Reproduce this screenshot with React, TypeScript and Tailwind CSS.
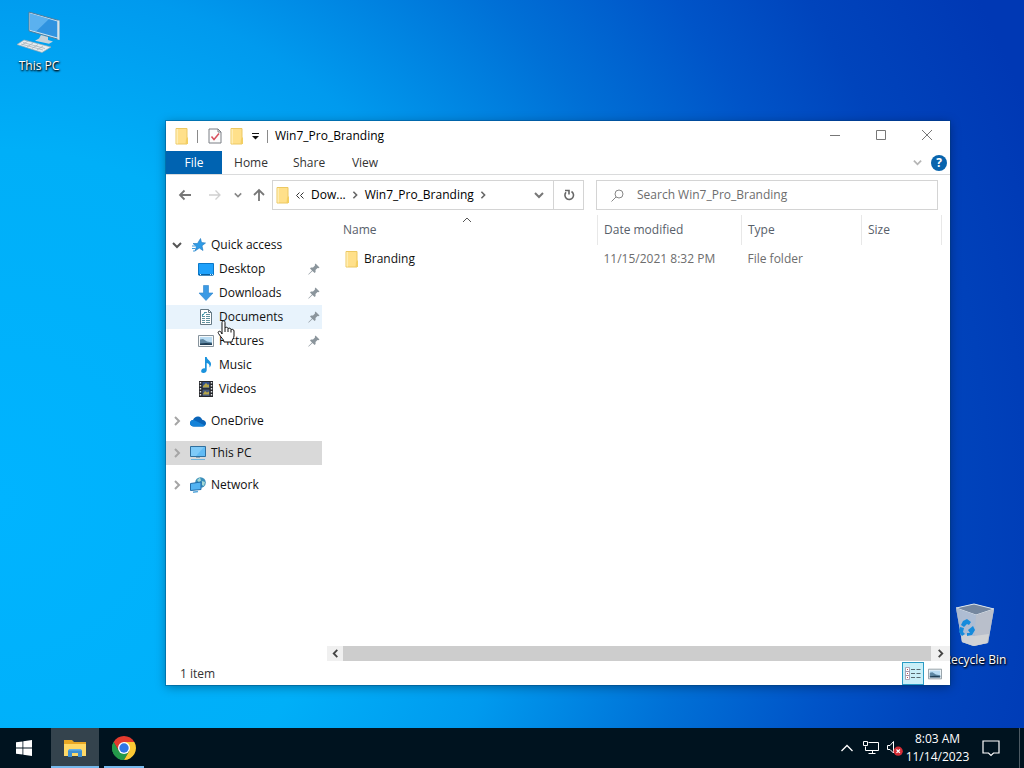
import type { ReactNode } from 'react';
import clsx from 'clsx';

type IconProps = { className?: string };

const DOWN = 'M1 3l4 4 4-4';
const UP = 'M1 7l4-4 4 4';
const RIGHT = 'M3 1l4 4-4 4';
const LEFT = 'M7 1L3 5l4 4';

function Chevron({ className, d }: IconProps & { d: string }) {
  return (
    <svg viewBox="0 0 10 10" className={clsx('shrink-0', className)} fill="none" stroke="currentColor">
      <path d={d} />
    </svg>
  );
}

function FolderIcon({ className }: IconProps) {
  return (
    <svg viewBox="0 0 14 17" className={clsx('h-[17px] w-[14px] shrink-0', className)}>
      <path d="M1 .5h11V16H1z" fill="#ffe08a" stroke="#ecc862" />
      <path d="M11 11l2-2v7h-2.500z" fill="#f3cf63" />
      <path d="M1.500 1H3v14.500H1.500z" fill="#ffedb2" />
    </svg>
  );
}

function CheckDocIcon() {
  return (
    <svg viewBox="0 0 14 16" className="h-4 w-[14px] shrink-0" fill="none">
      <path d="M1 1h9l3 3v11H1z" fill="#fcfcfc" stroke="#7a7f85" />
      <path d="M10 1v3h3" stroke="#7a7f85" />
      <path d="M3.500 8.500l2.500 3 5-6" stroke="#d8505e" strokeWidth="1.500" />
    </svg>
  );
}

function StarIcon() {
  return (
    <svg viewBox="0 0 14 14" className="size-[14px]">
      <path d="M8.500.5l1 4 4 .5L10 7.800l1 4.700-3.700-2.400L3 13l1.500-4.500L1 5.500h4.500z" fill="#2f9be6" stroke="#1976bd" strokeWidth=".6" />
      <path d="M0 8h4M0 10.500h3.500M1 13h2" stroke="#3f9bdc" />
    </svg>
  );
}

function DesktopIcon() {
  return (
    <svg viewBox="0 0 16 13" className="h-[13px] w-4">
      <path d="M.5.5h15V12H.5z" fill="#1ea1fb" stroke="#0b78c8" />
      <path d="M1 11h14v1.500H1z" fill="#085f9f" />
      <path d="M2 11.500h1M12 11.500h1M14 11.500h1" stroke="#d6efff" />
    </svg>
  );
}

function DownloadIcon() {
  return (
    <svg viewBox="0 0 16 16" className="size-4">
      <path d="M5.500.5h5V8H15l-7 7.500L1 8h4.500z" fill="#3c9ae4" stroke="#2d83cb" strokeWidth=".6" />
    </svg>
  );
}

function DocumentIcon() {
  return (
    <svg viewBox="0 0 12 16" className="h-4 w-3" fill="none">
      <path d="M.5.5h8l3 3v12H.5z" fill="#fff" stroke="#657985" />
      <path d="M8.500.5v3h3" stroke="#657985" />
      <path d="M4 3.500h3M2 5.500h2M6 5.500h4M2 7.500h3M6 7.500h4M2 9.500h3M6 9.500h4M2 11.500h3M6 11.500h4M2 13.500h3M6 13.500h4" stroke="#5f919e" />
      <path d="M2 7l3-3.500" stroke="#36a0b5" />
    </svg>
  );
}

function PictureIcon({ className }: IconProps) {
  return (
    <svg viewBox="0 0 16 12" className={clsx('h-3', className ?? 'w-4')}>
      <path d="M.5.5h15v11H.5z" fill="#f7fafb" stroke="#87939c" />
      <path d="M2 2h12v8H2z" fill="#b9dcf3" />
      <path d="M2 4.500l3-.5 4 2.500 5 1V9H2z" fill="#5e87a3" />
      <path d="M2 8.500L8 8l6 .5V10H2z" fill="#213f56" />
    </svg>
  );
}

function MusicIcon() {
  return (
    <svg viewBox="0 0 14 16" className="h-4 w-[14px]">
      <path d="M6 0h1.700c.3 3 4.800 4 4.300 7.500-.2 1.500-.8 2.200-1.500 3 .4-2.500-.5-4-2.800-4.500v7.200c0 1.500-1.500 2.800-3.200 2.800S2 15 2.200 13.700C2.500 12 4.200 11 6 11.500z" fill="#1a92dd" />
    </svg>
  );
}

function VideoIcon() {
  return (
    <svg viewBox="0 0 14 16" className="h-4 w-[14px]">
      <path d="M0 0h14v16H0z" fill="#26282c" />
      <path d="M1.500 1v15M12.500 1v15" stroke="#dfe3e6" strokeWidth="1.400" strokeDasharray="1.500 1.500" />
      <path d="M3.500 1h7v6.200h-7z" fill="#34528c" />
      <path d="M3.500 8.500h7V15h-7z" fill="#45597e" />
      <path d="M4 5l3-3 2 2 1-1v3.500H4zM4 13l2-3 2 1.500 2-1v3H4z" fill="#b6a549" />
    </svg>
  );
}

function CloudIcon() {
  return (
    <svg viewBox="0 0 16 11" className="h-[11px] w-4">
      <path d="M4 10.500C1.500 10.500 0 9 0 7.200c0-1.700 1.300-3 3-3.200C4 1.500 6 .3 8.200.5c2 .2 3.300 1.500 4 3.200C14.500 4 16 5.300 16 7.300c0 2-1.400 3.200-3.300 3.200z" fill="#0a64b8" />
      <path d="M4 10.500C1.500 10.500 0 9 0 7.200c0-1.700 1.300-3 3-3.200 2 .1 3 1 4.500 1.800L15 9.500c-.6.7-1.300 1-2.300 1z" fill="#1583d9" />
    </svg>
  );
}

function MonitorIcon() {
  return (
    <svg viewBox="0 0 16 16" className="size-4">
      <path d="M.5 1.500h15v10H.5z" fill="#62bbf4" stroke="#2f6f9e" />
      <path d="M1 2h13L6 11H1z" fill="#93d3fa" opacity=".6" />
      <path d="M6 12h4v1H6z" fill="#8da5b5" />
      <path d="M1 14.500h14" stroke="#70b4dc" />
    </svg>
  );
}

function NetworkIcon() {
  return (
    <svg viewBox="0 0 16 16" className="size-4">
      <circle cx="10.500" cy="5.500" r="5.300" fill="#3b8fbb" />
      <path d="M7 3l3-2.500 1 3-2 2zM12 4l3 1-1 4-2-1z" fill="#a5d8d5" />
      <path d="M.5 6.500L11 5v7.500l-10.500 1z" fill="#52b3f2" stroke="#226da9" />
      <path d="M3 15.200l5-.7" stroke="#59a9dc" strokeWidth="1.500" />
    </svg>
  );
}

function PinIcon() {
  return (
    <svg viewBox="0 0 12 12" className="size-3 text-[#8b959c]">
      <path d="M7.500.5l4 4-1.200.7-.8-.2L7.500 7l.1 2-1 1L4.500 8 .8 11.500l-.5.2.2-.6L4 7.500 2 5.400l1-1 2 .1L7 2.500l-.2-.8z" fill="currentColor" />
    </svg>
  );
}

function ComputerIcon() {
  return (
    <svg viewBox="0 0 44 42" className="h-[42px] w-11">
      <path d="M12 1l30 8.500v19L12 20z" fill="#cfe4f2" stroke="#4f7d9d" />
      <path d="M13 2.500l27.500 8v16L13 18.800z" fill="#2f93e0" />
      <path d="M13 2.500l19 5.500-13 12.500-6-1.700z" fill="#79c5f8" opacity=".6" />
      <path d="M40.500 9.500h2V29l-2-.6z" fill="#d9e4ea" />
      <path d="M24 24l7 2v3l5 1.500-4 2.200-14-3 4-2.200z" fill="#c9d3da" />
      <path d="M7 29l27 7-9 5.500L0 33.500z" fill="#e8edf0" stroke="#9eabb4" strokeWidth=".7" />
      <path d="M6 31.500l22 6M4 33l22 6M11 30l-6 4M16 32l-6 4M21 33.500l-6 4M26 35l-6 4" stroke="#a8b4bd" strokeWidth=".8" />
    </svg>
  );
}

function RecycleBinIcon() {
  return (
    <svg viewBox="0 0 40 44" className="h-11 w-10">
      <path d="M1 5l18-4 20 5-6 34-15 3-11-4z" fill="#aebdce" />
      <path d="M1 5l18-4 20 5-18 6z" fill="#75879f" stroke="#dce5ec" />
      <path d="M1 5l20 7-2 31-12-4z" fill="#aebdd3" />
      <path d="M21 12l18-6-6 34-14 3z" fill="#b9bfcb" />
      <path d="M6 31l13 2 15-2-2 9-13 3-12-4z" fill="#d9d9d8" opacity=".75" />
      <path d="M8 18l4-2 4 3-2 3-2-1-3 3-3-2zM5 24l4 1-1 4 2 2-3 2-3-4zM13 27l5-4 2 4-3 5-5 1v-3h3z" fill="#168bdc" />
    </svg>
  );
}

function HandCursor() {
  return (
    <svg viewBox="0 0 18 23" className="h-[23px] w-[18px]">
      <path d="M5 14V2.500C5 .3 8 .3 8 2.500V8c.5-1.200 3-1 3 .7.800-1 3-.6 3 1 .8-.8 3-.4 3 1.300v5c0 2-2 3.500-2 6H7c0-2.500-3-4.500-5.500-8.500C.3 11.500 2.500 10.500 4 12z" fill="#fff" stroke="#111" />
      <path d="M8 8v4M11 9v3M14 10v2.500" stroke="#111" />
    </svg>
  );
}

function ExplorerTaskIcon() {
  return (
    <svg viewBox="0 0 22 18" className="h-[18px] w-[22px]">
      <path d="M0 1h8l2 2h12v14H0z" fill="#e9a825" />
      <path d="M0 5h22v12H0z" fill="#ffd967" />
      <path d="M4 18v-6.500L5.500 10h11l1.500 1.500V18h-4v-4H8v4z" fill="#3f8fd0" />
      <path d="M4 11.500L5.500 10h11l1.500 1.500z" fill="#67b1e4" />
    </svg>
  );
}

function ChromeIcon() {
  return (
    <svg viewBox="0 0 24 24" className="size-6">
      <path d="M12 12L1.610 6a12 12 0 0 1 20.780 0z" fill="#e33b2e" />
      <path d="M1.610 6l5.190 9 5.200 3 5.200-3L12 24A12 12 0 0 1 1.610 6z" fill="#24994a" />
      <path d="M12 6h10.390A12 12 0 0 1 12 24l5.200-9z" fill="#fcc934" />
      <path d="M6.800 15L1.610 6H12z" fill="#e33b2e" />
      <path d="M1.610 6l5.190 9L12 24A12 12 0 0 1 1.610 6z" fill="#24994a" />
      <circle cx="12" cy="12" r="6" fill="#fff" />
      <circle cx="12" cy="12" r="4.700" fill="#2f76e5" />
    </svg>
  );
}

type NavEntry = { label: string; icon: ReactNode; pinned?: boolean; hovered?: boolean };

const quickAccess: NavEntry[] = [
  { label: 'Desktop', icon: <DesktopIcon />, pinned: true },
  { label: 'Downloads', icon: <DownloadIcon />, pinned: true },
  { label: 'Documents', icon: <DocumentIcon />, pinned: true, hovered: true },
  { label: 'Pictures', icon: <PictureIcon />, pinned: true },
  { label: 'Music', icon: <MusicIcon /> },
  { label: 'Videos', icon: <VideoIcon /> },
];

const roots = [
  { label: 'OneDrive', icon: <CloudIcon />, selected: false },
  { label: 'This PC', icon: <MonitorIcon />, selected: true },
  { label: 'Network', icon: <NetworkIcon />, selected: false },
];

const windowControls = [
  { name: 'Minimize', d: 'M1 5.500h10' },
  { name: 'Maximize', d: 'M1.500.5h9v9h-9z' },
  { name: 'Close', d: 'M1 0l10 10M11 0L1 10' },
];

function TitleBar() {
  return (
    <header className="flex h-[30px] shrink-0 items-center">
      <div className="flex flex-1 items-center pl-[9px]">
        <FolderIcon />
        <span className="ml-2 h-[13px] w-px bg-[#8a8a8a]" />
        <button aria-label="Properties" className="ml-[10px]"><CheckDocIcon /></button>
        <button aria-label="New folder" className="ml-2"><FolderIcon /></button>
        <button aria-label="Customize Quick Access Toolbar" className="ml-[7px]">
          <svg viewBox="0 0 9 8" className="h-2 w-[9px]">
            <path d="M1 1.500h7" stroke="#111" />
            <path d="M1 4h7L4.500 7.500z" fill="#111" />
          </svg>
        </button>
        <span className="ml-[7px] h-[13px] w-px bg-[#8a8a8a]" />
        <h1 className="ml-[7px] text-black">Win7_Pro_Branding</h1>
      </div>
      {windowControls.map(({ name, d }) => (
        <button key={name} aria-label={name} className="flex h-full w-[46px] items-center justify-center">
          <svg viewBox="0 0 12 12" className="size-3" fill="none" stroke="#777">
            <path d={d} />
          </svg>
        </button>
      ))}
    </header>
  );
}

function Ribbon() {
  return (
    <nav className="flex h-6 shrink-0 items-stretch border-b border-[#dadbdc] text-[#333]">
      <button className="w-14 bg-[#0063b1] text-white">File</button>
      <button className="w-[58px]">Home</button>
      <button className="w-[58px]">Share</button>
      <button className="w-[54px]">View</button>
      <div className="flex flex-1 items-center justify-end gap-[9px] pr-[3px]">
        <button aria-label="Expand the Ribbon"><Chevron d={DOWN} className="size-[9px] stroke-2 text-[#b5b5b5]" /></button>
        <button aria-label="Help" className="flex size-4 items-center justify-center rounded-full bg-[#0864ad] leading-4 font-bold text-white">?</button>
      </div>
    </nav>
  );
}

function AddressBar() {
  return (
    <div className="flex h-10 shrink-0 items-center pr-3 text-[#555]">
      <div className="flex w-[106px] shrink-0 items-center pl-3">
        <button aria-label="Back">
          <svg viewBox="0 0 14 12" className="h-3 w-[14px]" fill="none" stroke="#777" strokeWidth="1.800"><path d="M13 6H2M6.500 1.500L2 6l4.500 4.500" /></svg>
        </button>
        <button aria-label="Forward" className="ml-4">
          <svg viewBox="0 0 14 12" className="h-3 w-[14px]" fill="none" stroke="#d0d0d0" strokeWidth="1.300"><path d="M1 6h11M7.500 1.500L12 6l-4.500 4.500" /></svg>
        </button>
        <button aria-label="Recent locations" className="ml-3">
          <Chevron d={DOWN} className="size-2 stroke-2 text-[#888]" />
        </button>
        <button aria-label="Up" className="ml-[10px]">
          <svg viewBox="0 0 14 14" className="size-[14px]" fill="none" stroke="#777" strokeWidth="1.800"><path d="M7 13V2M2 7l5-5 5 5" /></svg>
        </button>
      </div>
      <div className="flex h-[30px] w-[312px] shrink-0 items-center border border-[#d4d4d4]">
        <div className="flex flex-1 items-center pl-[3px] text-black">
          <FolderIcon />
          <svg viewBox="0 0 8 7" className="ml-[6px] h-[7px] w-2" fill="none" stroke="#333"><path d="M3.500.5l-3 3 3 3M7.500.5l-3 3 3 3" /></svg>
          <a href="#downloads" className="ml-[7px]">Dow...</a>
          <Chevron d={RIGHT} className="ml-[5px] size-2 stroke-2 text-[#666]" />
          <a href="#branding" className="ml-[6px]">Win7_Pro_Branding</a>
          <Chevron d={RIGHT} className="ml-[5px] size-2 stroke-2 text-[#666]" />
        </div>
        <button aria-label="Previous locations" className="mr-[9px]">
          <Chevron d={DOWN} className="size-[10px] stroke-2 text-[#777]" />
        </button>
        <button aria-label="Refresh" className="flex h-full w-[30px] items-center justify-center border-l border-[#d4d4d4]">
          <svg viewBox="0 0 12 12" className="size-3" fill="none" stroke="#666" strokeWidth="1.600">
            <path d="M8.500 2.500A4.300 4.300 0 1 1 3 3.300M2 1.500h4v4" />
          </svg>
        </button>
      </div>
      <label className="ml-3 flex h-[30px] min-w-0 flex-1 items-center border border-[#d4d4d4] pl-[14px]">
        <svg viewBox="0 0 13 13" className="size-[13px] shrink-0" fill="none" stroke="#888"><circle cx="8" cy="5" r="4" /><path d="M5 8L.5 12.500" /></svg>
        <input type="search" aria-label="Search Win7_Pro_Branding" placeholder="Search Win7_Pro_Branding" className="ml-[13px] min-w-0 flex-1 bg-transparent outline-none placeholder:text-[#6d6d6d]" />
      </label>
    </div>
  );
}

function Sidebar() {
  return (
    <aside className="w-[156px] shrink-0 pt-[18px] text-[#111]">
      <a href="#quick-access" className="flex h-6 items-center pl-[6px]">
        <Chevron d={DOWN} className="size-[10px] stroke-2 text-[#555]" />
        <span className="ml-[9px] flex w-4 justify-center"><StarIcon /></span>
        <span className="ml-1">Quick access</span>
      </a>
      {quickAccess.map(({ label, icon, pinned, hovered }) => (
        <a key={label} href={`#${label.toLowerCase()}`} className={clsx('relative flex h-6 items-center pr-[2px] pl-8', hovered && 'bg-[#e8f3fc]')}>
          <span className="flex w-4 justify-center">{icon}</span>
          <span className="ml-[5px] flex-1">{label}</span>
          {pinned && <PinIcon />}
          {hovered && <span className="absolute top-[15px] left-[51px] z-10"><HandCursor /></span>}
        </a>
      ))}
      {roots.map(({ label, icon, selected }) => (
        <a key={label} href={`#${label}`} className={clsx('mt-2 flex h-6 items-center pl-[6px]', selected && 'bg-[#d9d9d9]')}>
          <Chevron d={RIGHT} className="size-[10px] stroke-2 text-[#a5a5a5]" />
          <span className="ml-2 flex w-4 justify-center">{icon}</span>
          <span className="ml-[5px]">{label}</span>
        </a>
      ))}
    </aside>
  );
}

function FileList() {
  return (
    <main className="flex min-w-0 flex-1 flex-col pl-[5px]">
      <div className="flex-1 pr-2 pl-[9px]">
        <table className="w-full table-fixed text-left">
          <thead>
            <tr className="h-[30px] text-[#57606a]">
              <th className="relative border-r border-[#e8e8e8] px-[7px] font-normal">
                Name
                <span className="absolute top-0 left-[126px]"><Chevron d={UP} className="size-[10px] text-[#555]" /></span>
              </th>
              <th className="w-36 border-r border-[#e8e8e8] px-[6px] font-normal">Date modified</th>
              <th className="w-[120px] border-r border-[#e8e8e8] px-[6px] font-normal">Type</th>
              <th className="w-20 border-r border-[#e8e8e8] px-[6px] font-normal">Size</th>
            </tr>
          </thead>
          <tbody>
            <tr className="h-7 text-[#6d6d6d]">
              <td className="px-[9px]">
                <a href="#folder" className="flex items-center gap-[5px] text-[#111]"><FolderIcon />Branding</a>
              </td>
              <td className="px-[6px]">11/15/2021 8:32 PM</td>
              <td className="px-[6px]">File folder</td>
              <td />
            </tr>
          </tbody>
        </table>
      </div>
      <div className="mb-px flex h-[15px] items-stretch bg-[#f0f0f0] text-[#444]">
        <button aria-label="Scroll left" className="flex w-4 items-center justify-center"><Chevron d={LEFT} className="size-[9px] stroke-2" /></button>
        <div className="flex-1 bg-[#cdcdcd]" />
        <button aria-label="Scroll right" className="flex w-[19px] items-center justify-center"><Chevron d={RIGHT} className="size-[9px] stroke-2" /></button>
      </div>
    </main>
  );
}

function StatusBar() {
  return (
    <footer className="flex h-[23px] shrink-0 items-center pl-[14px] text-[#333]">
      <span className="flex-1">1 item</span>
      <button aria-label="Details view" className="flex h-full w-[22px] items-center justify-center border border-[#2a9bc4] bg-[#c9eff8]">
        <svg viewBox="0 0 16 13" className="h-[13px] w-4 shrink-0" fill="none">
          <path d="M.5.5h4v4h-4zM.5 4.500h4v4h-4zM.5 8.500h4v4h-4z" fill="#fff" stroke="#a08fa8" strokeWidth=".8" />
          <path d="M2 2.500h1M2 6.500h1M2 10.500h1" stroke="#c0504d" />
          <path d="M6 2.500h4M11.500 2.500h4M6 6.500h4M11.500 6.500h4M6 10.500h4M11.500 10.500h4" stroke="#56686f" />
        </svg>
      </button>
      <button aria-label="Large icons view" className="mr-2 ml-1"><PictureIcon className="w-[14px]" /></button>
    </footer>
  );
}

function Taskbar() {
  return (
    <footer className="flex h-10 shrink-0 items-stretch bg-[#00131f] text-white">
      <button aria-label="Start" className="flex w-12 items-center justify-center">
        <svg viewBox="0 0 16 16" className="size-4" fill="#fff">
          <path d="M0 2.300L6.500 1.400v6.200H0zM7.300 1.300L16 0v7.600H7.300zM0 8.400h6.500v6.200L0 13.700zM7.300 8.400H16V16l-8.700-1.300z" />
        </svg>
      </button>
      <button aria-label="File Explorer" className="ml-[3px] flex w-12 items-center justify-center border-b-2 border-[#76b9ed] bg-[#34434d] pt-[2px]">
        <ExplorerTaskIcon />
      </button>
      <button aria-label="Google Chrome" className="mx-[5px] flex w-10 items-center justify-center border-b-2 border-[#76b9ed] pt-[2px]">
        <ChromeIcon />
      </button>
      <div className="flex flex-1 items-center justify-end">
        <button aria-label="Show hidden icons">
          <svg viewBox="0 0 12 8" className="h-2 w-3" fill="none" stroke="#fff" strokeWidth="1.300"><path d="M.5 7L6 1.500 11.500 7" /></svg>
        </button>
        <button aria-label="Network" className="ml-[10px]">
          <svg viewBox="0 0 16 14" className="h-[14px] w-4" fill="none" stroke="#fff">
            <path d="M5.500 1.500h10v8h-13v-4M9.500 9.500v3M5.500 12.500h7M.5.5h4v4h-4z" />
          </svg>
        </button>
        <button aria-label="Volume" className="ml-[7px]">
          <svg viewBox="0 0 17 16" className="h-4 w-[17px]" fill="none">
            <path d="M1.500 5.500H4l3.500-4V13L4 9.500H1.500z" stroke="#fff" />
            <circle cx="12.200" cy="11.200" r="4.600" fill="#d42c35" />
            <path d="M10.500 9.500l3.400 3.400M13.900 9.500l-3.400 3.400" stroke="#fff" strokeWidth="1.200" />
          </svg>
        </button>
        <button className="w-[69px] text-center leading-[18px]">
          <span className="block">8:03 AM</span>
          <span className="block">11/14/2023</span>
        </button>
        <button aria-label="Notifications" className="mr-[19px] ml-[10px]">
          <svg viewBox="0 0 18 18" className="size-[18px]" fill="none" stroke="#fff" strokeWidth="1.200"><path d="M1 2h16v12h-5.500L9 16.500 6.500 14H1z" /></svg>
        </button>
        <button aria-label="Show desktop" className="h-full w-[5px] border-l border-[#4d5a63]" />
      </div>
    </footer>
  );
}

export default function App() {
  return (
    <div className="flex h-screen flex-col overflow-hidden bg-[radial-gradient(circle_at_0px_500px,#00b4ff_0px,#00aff8_350px,#009aee_520px,#0085e2_610px,#0070d6_700px,#0054c8_840px,#0044bc_950px,#0038b4_1100px)] font-['Open_Sans','Noto_Sans',sans-serif] text-[12px] leading-4">
      <div className="relative flex-1">
        <button className="absolute top-[11px] left-[1px] flex w-[76px] flex-col items-center gap-[5px] text-white [text-shadow:1px_1px_2px_#000,0_1px_2px_#000]">
          <ComputerIcon />
          This PC
        </button>
        <button className="absolute right-[11px] bottom-[60px] flex w-[76px] flex-col items-center gap-[5px] whitespace-nowrap text-white [text-shadow:1px_1px_2px_#000,0_1px_2px_#000]">
          <RecycleBinIcon />
          Recycle Bin
        </button>
        <section className="absolute top-[121px] right-[74px] bottom-[43px] left-[166px] flex flex-col bg-white shadow-[0_0_0_1px_rgba(0,60,110,0.35),0_2px_10px_rgba(0,0,0,0.35)]">
          <TitleBar />
          <Ribbon />
          <AddressBar />
          <div className="flex min-h-0 flex-1">
            <Sidebar />
            <FileList />
          </div>
          <StatusBar />
        </section>
      </div>
      <Taskbar />
    </div>
  );
}
